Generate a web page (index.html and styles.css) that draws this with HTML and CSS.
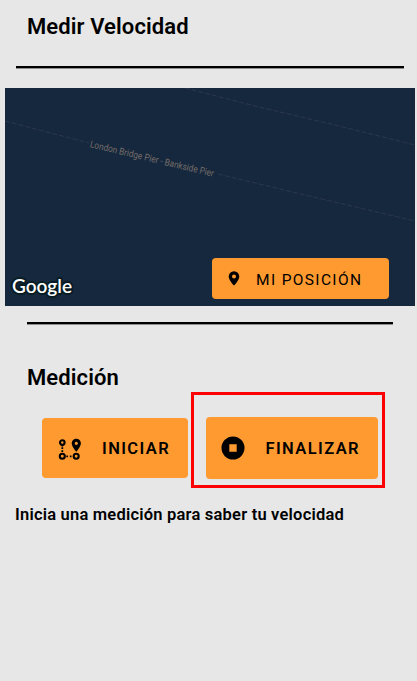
FILE: index.html
```
<!DOCTYPE html>
<html lang="es">
<head>
<meta charset="utf-8">
<title>Medir Velocidad</title>
<link rel="stylesheet" href="styles.css">
</head>
<body>
<main class="screen">
  <h1 class="heading">Medir Velocidad</h1>
  <hr class="rule rule-top">
  <section class="map">
    <svg class="map-canvas" width="410" height="218" viewBox="0 0 410 218">
      <path class="route" d="M180 0L250 18L330 37L410 57M0 33L84 55M213 86L300 107L410 133"/>
      <text class="route-label" transform="translate(84.500 59) rotate(13.500)" textLength="127" lengthAdjust="spacingAndGlyphs">London Bridge Pier - Bankside Pier</text>
      <text class="brand" x="7" y="205" textLength="60" lengthAdjust="spacingAndGlyphs">Google</text>
    </svg>
    <button class="button locate">
      <svg width="12" height="15" viewBox="0 0 12 15"><path fill-rule="evenodd" d="M6 .3a5.300 5.300 0 0 0-5.300 5.300C.7 9.500 6 14.700 6 14.700s5.300-5.200 5.300-9.100A5.300 5.300 0 0 0 6 .3Zm0 3.300a2 2 0 1 1 0 4 2 2 0 0 1 0-4Z"/></svg>
      <span>MI POSICIÓN</span>
    </button>
  </section>
  <hr class="rule rule-middle">
  <h2 class="heading subheading">Medición</h2>
  <div class="actions">
    <button class="button start">
      <svg width="24" height="24" viewBox="0 0 24 24">
        <g fill="none" stroke="#000" stroke-width="2.100"><circle cx="5.300" cy="5.600" r="2.300"/><circle cx="5.300" cy="19.300" r="2.500"/><circle cx="19.200" cy="19.300" r="2.500"/></g>
        <path d="M3.300 7.500h4l-2 2.500zM4.400 10.200h1.800v1.700H4.400zM4.400 13.300h1.800V15H4.400zM9.300 18.400H11v1.800H9.300zM12.800 18.400h1.700v1.800h-1.700z"/>
        <path fill-rule="evenodd" d="M19.300 1.700a4.600 4.600 0 0 0-4.600 4.600c0 3.400 4.600 8.500 4.600 8.500s4.600-5.100 4.600-8.500a4.600 4.600 0 0 0-4.600-4.600Zm0 3a1.600 1.600 0 1 1 0 3.200 1.600 1.600 0 0 1 0-3.200Z"/>
      </svg>
      <span>INICIAR</span>
    </button>
    <div class="highlight">
      <button class="button finish">
        <svg width="24" height="24" viewBox="0 0 24 24"><path fill-rule="evenodd" d="M12 .5a11.500 11.500 0 1 0 0 23 11.500 11.500 0 0 0 0-23ZM8.300 8.300h7.400v7.400H8.300Z"/></svg>
        <span>FINALIZAR</span>
      </button>
    </div>
  </div>
  <p class="hint">Inicia una medición para saber tu velocidad</p>
</main>
</body>
</html>
```
FILE: styles.css
```
* { box-sizing: border-box; }
body {
  margin: 0;
  background: #e7e7e7;
  color: #000;
  font-family: Roboto, sans-serif;
}
.screen {
  display: flex;
  flex-direction: column;
  width: 417px;
  height: 681px;
}
.heading {
  margin: 14px 0 0 27px;
  font-size: 22px;
  line-height: 26px;
  font-weight: 560;
  letter-spacing: 0.100px;
}
.rule {
  flex: none;
  height: 3px;
  margin: 0;
  border: 0;
  border-bottom: 1px solid #8c8c8c;
  background: #000;
}
.rule-top { margin: 26px 13px 0 16px; }
.map {
  flex: none;
  display: flex;
  justify-content: flex-end;
  align-items: flex-end;
  position: relative;
  width: 410px;
  height: 218px;
  margin: 19px 0 0 5px;
  padding: 0 26.500px 7px 0;
  background: #16283e;
}
.map-canvas { position: absolute; inset: 0; }
.route {
  fill: none;
  stroke: #2c374a;
  stroke-width: 1;
  stroke-dasharray: 5 2;
}
.route-label {
  fill: #756c68;
  font-size: 9.500px;
}
.brand {
  fill: #fff;
  stroke: #071c23;
  stroke-width: 4px;
  stroke-linejoin: round;
  paint-order: stroke;
  font: 600 20px Lato, sans-serif;
}
.rule-middle { margin: 16px 24px 0 27px; }
.subheading { margin-top: 40px; }
.button {
  display: flex;
  align-items: center;
  border: 0;
  border-radius: 4px;
  background: #ff9a30;
  color: #000;
  font: 560 16.500px/20px Roboto, sans-serif;
  letter-spacing: 1.400px;
  white-space: nowrap;
}
.button svg { flex: none; }
.locate {
  position: relative;
  width: 177px;
  height: 41px;
  gap: 16.500px;
  padding: 2px 0 0 16px;
  font-size: 15.500px;
  font-weight: 400;
  letter-spacing: 1.350px;
}
.locate svg { margin-top: -2px; }
.actions {
  display: flex;
  align-items: flex-start;
  gap: 3px;
  margin: 1px 0 0 42px;
}
.start {
  width: 146px;
  height: 60px;
  margin-top: 26px;
  padding: 1px 0 0 15px;
  gap: 21px;
}
.highlight {
  width: 194px;
  height: 96px;
  padding: 21.500px 0 0 11.500px;
  border: 3px solid #f00;
}
.finish {
  width: 172px;
  height: 62px;
  padding: 0 0 0 15px;
  gap: 21px;
}
.finish span { margin-top: 2px; }
.hint {
  margin: 17px 0 0 15px;
  font-size: 16.500px;
  line-height: 20px;
  font-weight: 580;
  letter-spacing: 0.210px;
  white-space: nowrap;
}
```
